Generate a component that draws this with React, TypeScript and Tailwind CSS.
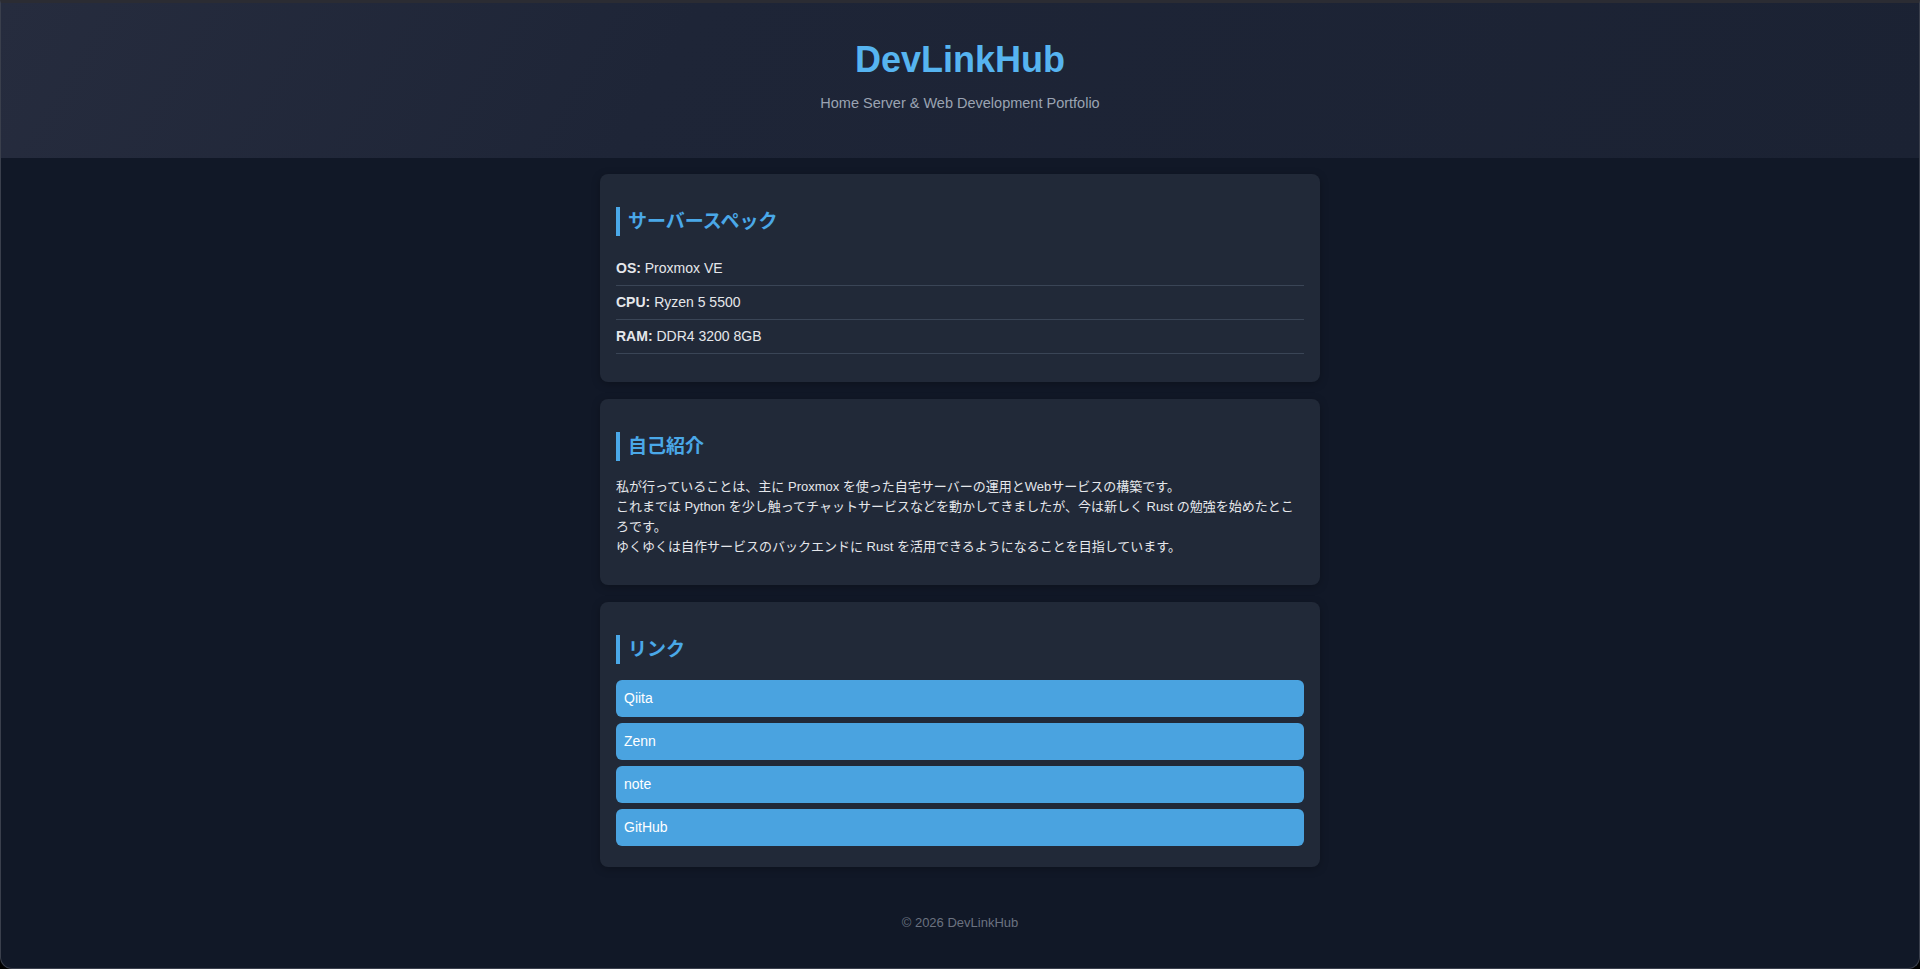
const SPECS = [
  { label: 'OS:', value: 'Proxmox VE' },
  { label: 'CPU:', value: 'Ryzen 5 5500' },
  { label: 'RAM:', value: 'DDR4 3200 8GB' },
]

const LINKS = ['Qiita', 'Zenn', 'note', 'GitHub']

function Card({ title, children, last }: { title: string; children: React.ReactNode; last?: boolean }) {
  return (
    <section className={`rounded-lg bg-[#212938] px-4 pt-[33px] shadow-[0_2px_8px_rgba(0,0,0,0.25)] ${last ? 'pb-[21px]' : 'pb-7'}`}>
      <h2 className="mb-4 border-l-4 border-[#4aa8e8] pl-2 text-[19px] font-bold leading-[29px] text-[#4aa8e8]">
        {title}
      </h2>
      {children}
    </section>
  )
}

export default function App() {
  return (
    <div
      className="min-h-[969px] bg-black"
      style={{ fontFamily: '"Liberation Sans", "Noto Sans CJK JP", sans-serif' }}
    >
      <div className="flex h-[969px] flex-col overflow-hidden rounded-b-[12px] border border-t-[3px] border-[#3a3f4c] border-t-[#2b2c33] bg-[#111827]">
        {/* header with a faint diagonal sheen */}
        <header className="h-[155px] shrink-0 bg-[linear-gradient(120deg,#262c3e_0%,#1e2537_35%,#1b2233_100%)] pt-[35px] text-center">
          <h1 className="text-[36px] font-bold leading-[44px] text-[#56b4f0]">DevLinkHub</h1>
          <p className="mt-[11px] text-[14.5px] leading-[20px] text-[#9aa3b2]">
            Home Server &amp; Web Development Portfolio
          </p>
        </header>

        <main className="mx-auto mt-4 flex w-[720px] flex-col gap-[17px]">
          <Card title="サーバースペック">
            <ul>
              {SPECS.map((s) => (
                <li
                  key={s.label}
                  className="border-b border-[#3a4556] py-2 text-[14px] leading-[17px] text-[#e5e7eb]"
                >
                  <strong className="font-bold">{s.label}</strong> {s.value}
                </li>
              ))}
            </ul>
          </Card>

          <Card title="自己紹介">
            <p className="text-[13px] leading-[20px] text-[#e5e7eb]">
              私が行っていることは、主に Proxmox を使った自宅サーバーの運用とWebサービスの構築です。
              <br />
              これまでは Python を少し触ってチャットサービスなどを動かしてきましたが、今は新しく Rust の勉強を始めたところです。
              <br />
              ゆくゆくは自作サービスのバックエンドに Rust を活用できるようになることを目指しています。
            </p>
          </Card>

          <Card title="リンク" last>
            <div className="flex flex-col gap-[6px]">
              {LINKS.map((l) => (
                <a
                  key={l}
                  href="#"
                  className="block h-[37px] rounded-md bg-[#4aa3e0] px-2 text-[14px] leading-[37px] text-white"
                >
                  {l}
                </a>
              ))}
            </div>
          </Card>
        </main>

        <footer className="pt-12 text-center text-[13px] leading-[16px] text-[#6b7280]">
          © 2026 DevLinkHub
        </footer>
      </div>
    </div>
  )
}
